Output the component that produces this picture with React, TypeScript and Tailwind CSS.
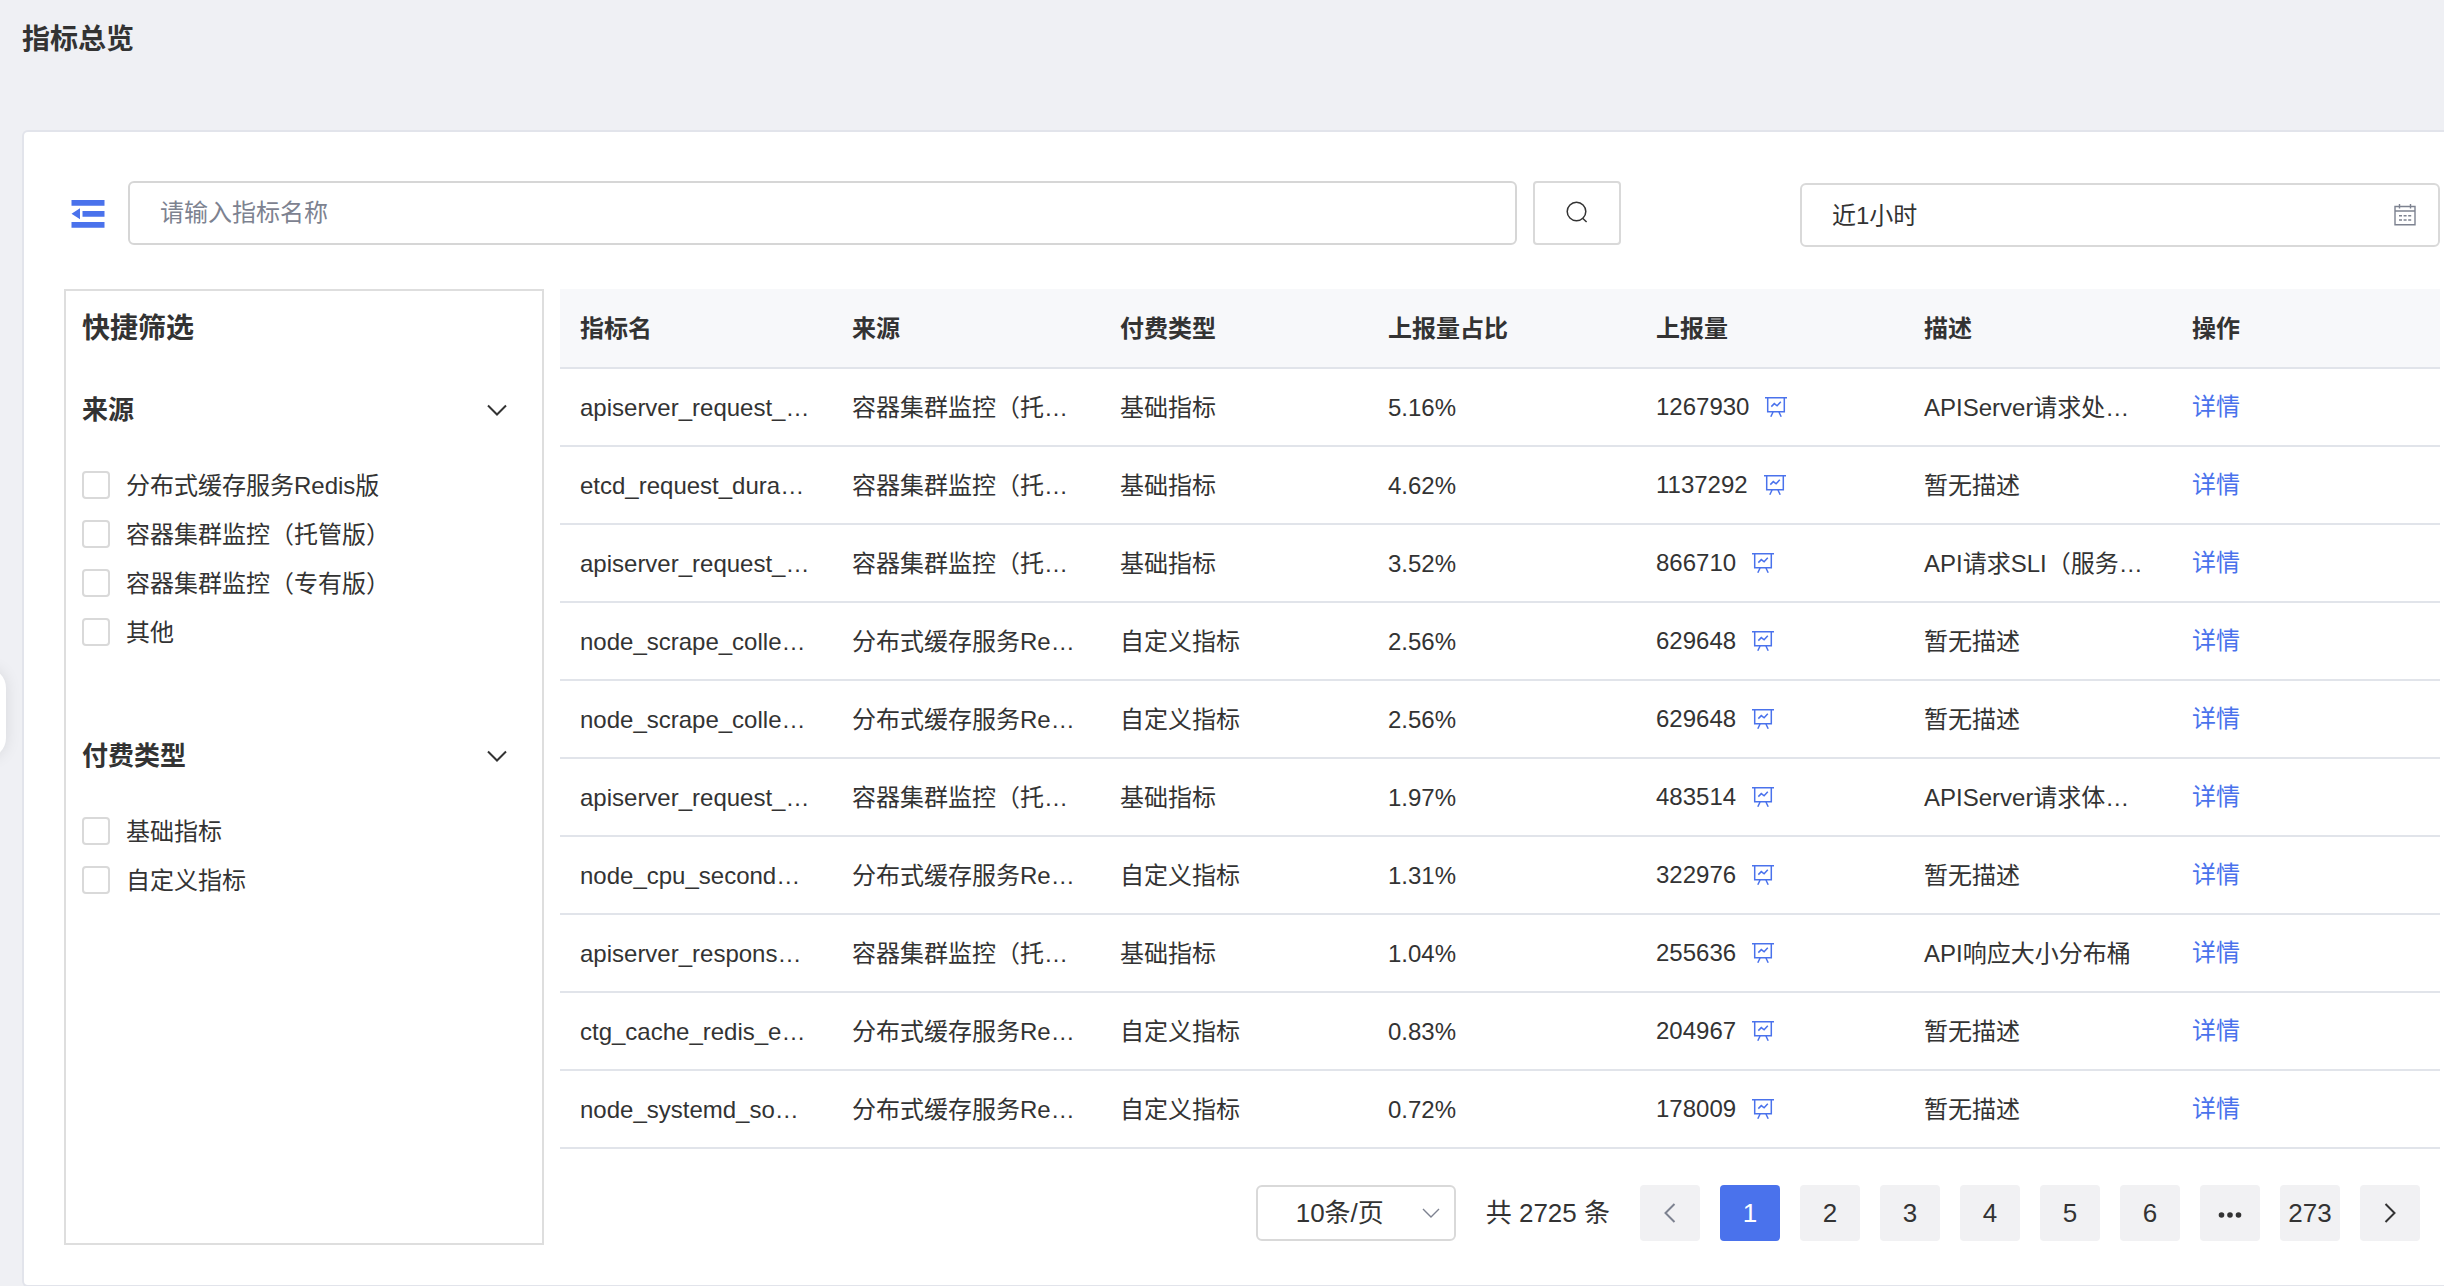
import { useState } from "react";

type Metric = {
  name: string;
  source: string;
  payType: string;
  ratio: string;
  amount: number;
  desc: string;
};

const METRICS: Metric[] = [
  { name: "apiserver_request_…", source: "容器集群监控（托…", payType: "基础指标", ratio: "5.16%", amount: 1267930, desc: "APIServer请求处…" },
  { name: "etcd_request_dura…", source: "容器集群监控（托…", payType: "基础指标", ratio: "4.62%", amount: 1137292, desc: "暂无描述" },
  { name: "apiserver_request_…", source: "容器集群监控（托…", payType: "基础指标", ratio: "3.52%", amount: 866710, desc: "API请求SLI（服务…" },
  { name: "node_scrape_colle…", source: "分布式缓存服务Re…", payType: "自定义指标", ratio: "2.56%", amount: 629648, desc: "暂无描述" },
  { name: "node_scrape_colle…", source: "分布式缓存服务Re…", payType: "自定义指标", ratio: "2.56%", amount: 629648, desc: "暂无描述" },
  { name: "apiserver_request_…", source: "容器集群监控（托…", payType: "基础指标", ratio: "1.97%", amount: 483514, desc: "APIServer请求体…" },
  { name: "node_cpu_second…", source: "分布式缓存服务Re…", payType: "自定义指标", ratio: "1.31%", amount: 322976, desc: "暂无描述" },
  { name: "apiserver_respons…", source: "容器集群监控（托…", payType: "基础指标", ratio: "1.04%", amount: 255636, desc: "API响应大小分布桶" },
  { name: "ctg_cache_redis_e…", source: "分布式缓存服务Re…", payType: "自定义指标", ratio: "0.83%", amount: 204967, desc: "暂无描述" },
  { name: "node_systemd_so…", source: "分布式缓存服务Re…", payType: "自定义指标", ratio: "0.72%", amount: 178009, desc: "暂无描述" },
];

const COLUMNS = ["指标名", "来源", "付费类型", "上报量占比", "上报量", "描述", "操作"];

const FILTERS = [
  { title: "来源", options: ["分布式缓存服务Redis版", "容器集群监控（托管版）", "容器集群监控（专有版）", "其他"] },
  { title: "付费类型", options: ["基础指标", "自定义指标"] },
];

const PAGES = [1, 2, 3, 4, 5, 6];

function CollapseIcon() {
  return (
    <svg width="34" height="28" viewBox="0 0 34 28" fill="currentColor">
      <path d="M.5 0h33v5.7H.5zM11.5 11h22v5.7h-22zM.5 22h33v5.7H.5zM9 8.3v11L.5 13.8z" />
    </svg>
  );
}

function SearchIcon() {
  return (
    <svg width="22" height="22" viewBox="0 0 22 22" fill="none" stroke="currentColor" strokeWidth="1.5">
      <circle cx="10.5" cy="10.5" r="9.3" />
      <path d="M16.6 17.2l4 3.8" />
    </svg>
  );
}

function CalendarIcon() {
  return (
    <svg width="22" height="22" viewBox="0 0 22 22" fill="none" stroke="currentColor" strokeWidth="1.4">
      <path d="M1 2.5h20v18.3H1zM1 7h20M5.5 0v4.5M16.5 0v4.5" />
      <path d="M5 11.7h3M9.6 11.7h3M14.2 11.7h3M5 16h3M9.6 16h3M14.2 16h3" />
    </svg>
  );
}

function BoardIcon() {
  return (
    <svg width="22" height="20" viewBox="0 0 22 20" fill="none" stroke="currentColor" strokeWidth="1.5">
      <path d="M0 .8h22M2.7 .8v13.9h16.6V.8M8.2 14.7l-2.4 5M13.8 14.7l2.4 5" />
      <path d="M6.3 9.6l3-3 2.8 2.2 3.7-4" />
    </svg>
  );
}

function Chevron({ className }: { className?: string }) {
  return (
    <svg width="20" height="12" viewBox="0 0 20 12" fill="none" stroke="currentColor" strokeWidth="2" className={className}>
      <path d="M1 1.5l9 9 9-9" />
    </svg>
  );
}

function FilterGroup({ title, options }: { title: string; options: string[] }) {
  const [open, setOpen] = useState(true);
  return (
    <section className="mb-[90px]">
      <button type="button" onClick={() => setOpen(!open)} className="flex h-10 w-full items-center justify-between pr-[19px] text-[26px] font-bold">
        {title}
        <Chevron className={open ? "" : "-rotate-90"} />
      </button>
      {open && (
        <div className="mt-[41px] flex flex-col gap-[21px]">
          {options.map((o) => (
            <label key={o} className="flex h-7 items-center gap-4">
              <input type="checkbox" className="size-7 shrink-0 appearance-none rounded border-2 border-[#d9d9d9] bg-white checked:border-[#4a72ec] checked:bg-[#4a72ec]" />
              <span className="pt-0.5">{o}</span>
            </label>
          ))}
        </div>
      )}
    </section>
  );
}

export default function App() {
  const [keyword, setKeyword] = useState("");
  const [page, setPage] = useState(1);
  const [showFilters, setShowFilters] = useState(true);

  const pageBtn = "flex h-14 w-[60px] items-center justify-center rounded";

  return (
    <div className="relative min-h-screen overflow-hidden bg-[#eff0f4] pl-[22px] font-['Liberation_Sans','Noto_Sans_CJK_SC',sans-serif] text-2xl text-[#333]">
      <button type="button" aria-label="展开菜单" className="absolute top-[668px] -left-6 h-[90px] w-[30px] rounded-r-[20px] bg-white shadow-[0_0_16px_rgba(0,0,0,0.1)]" />
      <header className="h-[130px] pt-5">
        <h1 className="text-[28px] leading-10 font-bold">指标总览</h1>
      </header>

      <main className="relative rounded-l-md border-2 border-r-0 border-[#e2e4eb] bg-white pt-[49px] pr-1 pb-10 pl-10">
        <div className="mb-[42px] flex items-end gap-[179px] pl-[7px]">
          <div className="flex flex-1 items-center gap-4 pb-0.5">
            <button type="button" aria-label="收起筛选" onClick={() => setShowFilters(!showFilters)} className="mr-[7px] pt-0.5 text-[#4a72ec]">
              <CollapseIcon />
            </button>
            <input
              aria-label="指标名称"
              value={keyword}
              onChange={(e) => setKeyword(e.target.value)}
              placeholder="请输入指标名称"
              className="h-16 min-w-0 flex-1 rounded-md border-2 border-[#d6d6d6] px-[30px] outline-none placeholder:text-[#7d8290]"
            />
            <button type="button" aria-label="搜索" className="flex h-16 w-[88px] items-center justify-center rounded border-2 border-[#d9d9d9] pb-0.5">
              <SearchIcon />
            </button>
          </div>
          <div className="relative w-[640px]">
            <input aria-label="时间范围" readOnly value="近1小时" className="h-16 w-full rounded-md border-2 border-[#d9d9d9] px-[30px] pb-1 outline-none" />
            <span className="absolute top-[21px] right-6 text-[#7d8290]"><CalendarIcon /></span>
          </div>
        </div>

        <div className="flex gap-4">
          {showFilters && (
            <aside className="w-[480px] shrink-0 border-2 border-[#dedede] px-4 pt-[18px]">
              <h2 className="mb-[41px] text-[28px] leading-10 font-bold">快捷筛选</h2>
              {FILTERS.map((f) => <FilterGroup key={f.title} title={f.title} options={f.options} />)}
            </aside>
          )}

          <div className="min-w-0 flex-1 pb-1">
            <table className="w-full table-fixed border-separate border-spacing-0 text-left">
              <thead>
                <tr className="h-20 bg-[#f7f8fa]">
                  {COLUMNS.map((c, i) => (
                    <th key={c} className={`border-b-2 border-[#e1e4ea] px-5 pt-0.5 font-bold ${i === 0 ? "w-[272px]" : ""}`}>{c}</th>
                  ))}
                </tr>
              </thead>
              <tbody>
                {METRICS.map((m, i) => (
                  <tr key={i} className="h-[78px] whitespace-nowrap *:border-b-2 *:border-[#e1e4ea] *:px-5">
                    <td className="pt-0.5">{m.name}</td>
                    <td className="pt-0.5">{m.source}</td>
                    <td className="pt-0.5">{m.payType}</td>
                    <td className="pt-0.5">{m.ratio}</td>
                    <td>
                      <span className="flex items-center gap-4">
                        {m.amount}
                        <button type="button" aria-label="查看趋势" className="text-[#4a72ec]"><BoardIcon /></button>
                      </span>
                    </td>
                    <td className="pt-0.5">{m.desc}</td>
                    <td><a href="#detail" className="text-[#4a72ec]">详情</a></td>
                  </tr>
                ))}
              </tbody>
            </table>

            <nav className="mt-9 flex items-center justify-end gap-5 pr-5 text-[26px]">
              <div className="relative mr-2.5">
                <select aria-label="每页条数" className="h-14 w-[200px] appearance-none rounded-md border-2 border-[#d9d9d9] bg-white pl-[38px] outline-none">
                  <option>10条/页</option>
                </select>
                <svg width="18" height="10" viewBox="0 0 18 10" fill="none" stroke="currentColor" strokeWidth="1.4" className="pointer-events-none absolute top-[23px] right-4 text-[#7d8290]">
                  <path d="M1 1l8 8 8-8" />
                </svg>
              </div>
              <span className="mr-2.5">共 2725 条</span>
              <button type="button" aria-label="上一页" onClick={() => setPage(Math.max(1, page - 1))} className={`${pageBtn} bg-[#f1f1f3] text-[#7d8290]`}>
                <Chevron className="rotate-90" />
              </button>
              {PAGES.map((p) => (
                <button key={p} type="button" onClick={() => setPage(p)} className={`${pageBtn} ${p === page ? "bg-[#4a72ec] text-white" : "bg-[#f1f1f3]"}`}>
                  {p}
                </button>
              ))}
              <button type="button" aria-label="向后 5 页" className={`${pageBtn} bg-[#f1f1f3] pt-1`}>
                <svg width="24" height="6" viewBox="0 0 24 6" fill="currentColor">
                  <circle cx="3.5" cy="3" r="2.8" />
                  <circle cx="12" cy="3" r="2.8" />
                  <circle cx="20.5" cy="3" r="2.8" />
                </svg>
              </button>
              <button type="button" onClick={() => setPage(273)} className={`${pageBtn} bg-[#f1f1f3]`}>273</button>
              <button type="button" aria-label="下一页" onClick={() => setPage(page + 1)} className={`${pageBtn} bg-[#f1f1f3]`}>
                <Chevron className="-rotate-90" />
              </button>
            </nav>
          </div>
        </div>
      </main>
    </div>
  );
}
